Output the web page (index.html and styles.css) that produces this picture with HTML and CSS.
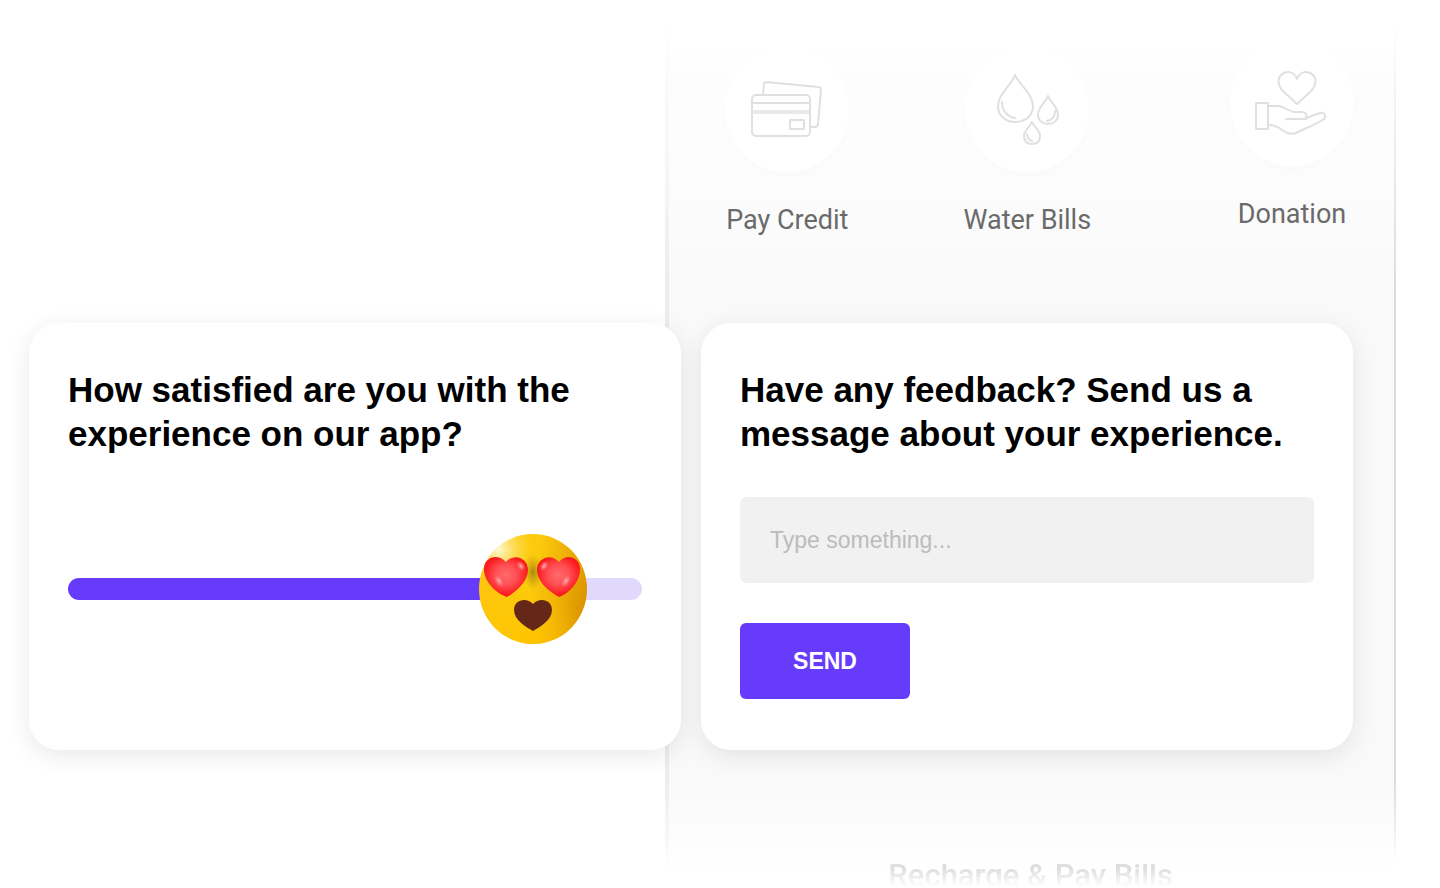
FILE: index.html
```html
<!DOCTYPE html>
<html lang="en">
<head>
    <meta charset="utf-8">
    <title>App feedback</title>
    <meta name="viewport" content="width=device-width, initial-scale=1.0">
    <link rel="stylesheet" href="styles.css">
</head>
<body>
    <main class="stage">
        <section class="phone">
            <div class="services">
                <div class="service">
                    <svg class="icon" viewBox="0 0 124 124">
                        <path d="M38 46 L39 36 Q39 34 41 34 L93 39 Q96 39 96 42 L93 76 Q93 79 90 79 L86 79"/>
                        <rect x="27" y="47" width="58" height="41" rx="4"/>
                        <path d="M27 55 H85"/>
                        <path d="M28 64 H84" stroke-width="4" stroke="#e9e9e9" stroke-linecap="butt"/>
                        <rect x="65" y="72" width="14" height="9"/>
                    </svg>
                    <span>Pay Credit</span>
                </div>
                <div class="service">
                    <svg class="icon" viewBox="0 0 124 124">
                        <path d="M50 27 C46 38 33 46 33 58 C33 68 41 74 50 74 C60 74 68 68 68 58 C68 46 55 38 50 27 Z"/>
                        <path d="M37 54 C37 63 43 69 50 70"/>
                        <path d="M83 48 C80 55 73 59 73 67 C73 72 77 76 83 76 C89 76 93 72 93 67 C93 59 86 55 83 48 Z"/>
                        <path d="M90 63 C90 69 87 72 82 73"/>
                        <path d="M67 74 C65 79 59 82 59 88 C59 93 62 96 67 96 C72 96 75 93 75 88 C75 82 69 79 67 74 Z"/>
                        <path d="M62 86 C62 90 64 92 67 93"/>
                    </svg>
                    <span>Water Bills</span>
                </div>
                <div class="service service-last">
                    <svg class="icon" viewBox="0 0 124 124">
                        <path d="M67 62 L53 49 C48 44 47 37 51 33 C56 28 64 29 67 37 C70 29 78 28 83 33 C87 37 86 44 81 49 Z"/>
                        <rect x="26" y="61" width="12" height="26"/>
                        <path d="M38 64 H49 C55 65 58 69 64 70 H72 C76 70 77 73 76 77 H56"/>
                        <path d="M76 76 L90 71 C94 70 97 74 94 77 C84 84 75 86 66 91 C60 93 56 91 52 88 C47 84 43 83 38 83"/>
                    </svg>
                    <span>Donation</span>
                </div>
            </div>
            <h3 class="phone-title">Recharge &amp; Pay Bills</h3>
        </section>

        <div class="cards">
            <section class="card">
                <h2><label for="rating">How satisfied are you with the experience on our app?</label></h2>
                <div class="slider" id="slider">
                    <input type="range" id="rating" min="0" max="100" value="81">
                    <svg class="emoji" viewBox="0 0 110 112">
                        <defs>
                            <linearGradient id="face" x1="0" y1="0.3" x2="1" y2="0.5">
                                <stop offset="0" stop-color="#ffc50b"/>
                                <stop offset="0.5" stop-color="#fccb0d"/>
                                <stop offset="1" stop-color="#dd9500"/>
                            </linearGradient>
                            <radialGradient id="shine" cx="0.18" cy="0.14" r="0.32">
                                <stop offset="0" stop-color="#fff8d8"/>
                                <stop offset="1" stop-color="#ffe04a" stop-opacity="0"/>
                            </radialGradient>
                            <radialGradient id="glow" cx="0.45" cy="1" r="0.55">
                                <stop offset="0" stop-color="#ffc400"/>
                                <stop offset="1" stop-color="#ffc400" stop-opacity="0"/>
                            </radialGradient>
                            <radialGradient id="shade">
                                <stop offset="0" stop-color="#a88a10"/>
                                <stop offset="1" stop-color="#c89a08" stop-opacity="0"/>
                            </radialGradient>
                            <radialGradient id="eye" cx="0.5" cy="0.45" r="0.5">
                                <stop offset="0" stop-color="#ff6a6e"/>
                                <stop offset="0.5" stop-color="#ff4f54"/>
                                <stop offset="1" stop-color="#fb1a1d"/>
                            </radialGradient>
                            <radialGradient id="spark">
                                <stop offset="0" stop-color="#ffb5ba"/>
                                <stop offset="1" stop-color="#ff7a80" stop-opacity="0"/>
                            </radialGradient>
                        </defs>
                        <ellipse cx="55" cy="56" rx="54" ry="55" fill="url(#face)"/>
                        <ellipse cx="55" cy="56" rx="54" ry="55" fill="url(#shine)"/>
                        <ellipse cx="55" cy="56" rx="54" ry="55" fill="url(#glow)"/>
                        <ellipse cx="55" cy="39" rx="10" ry="18" fill="url(#shade)"/>
                        <path d="M29 64 C22 62 6 51 6 36 C6 24 20 20 28 29 C35 20 50 24 50 37 C50 48 39 58 29 64 Z" fill="url(#eye)"/>
                        <path d="M81 64 C88 62 102 51 102 36 C102 24 88 20 81 29 C74 20 59 24 59 37 C59 48 70 58 81 64 Z" fill="url(#eye)"/>
                        <ellipse cx="43" cy="33" rx="4" ry="6" fill="url(#spark)" transform="rotate(-35 43 33)"/>
                        <ellipse cx="21" cy="48" rx="4" ry="7" fill="url(#spark)" transform="rotate(-30 21 48)"/>
                        <ellipse cx="66" cy="33" rx="4" ry="6" fill="url(#spark)" transform="rotate(35 66 33)"/>
                        <ellipse cx="88" cy="48" rx="4" ry="7" fill="url(#spark)" transform="rotate(30 88 48)"/>
                        <path d="M55 98 C48 94 36 87 36 77 C36 66 49 64 55 71 C61 64 74 66 74 77 C74 87 62 94 55 98 Z" fill="#642718"/>
                    </svg>
                </div>
            </section>

            <form class="card">
                <h2><label for="message">Have any feedback? Send us a message about your experience.</label></h2>
                <input type="text" class="message" id="message" placeholder="Type something...">
                <button type="button" class="send">SEND</button>
            </form>
        </div>
    </main>

    <script src="script.js"></script>
</body>
</html>
```
FILE: styles.css
```css
* {
    box-sizing: border-box;
}

body {
    margin: 0;
    background-color: white;
    font-family: "Liberation Sans", Arial, sans-serif;
}

h2, h3 {
    margin: 0;
}

/* the phone and the cards share one grid cell, cards on top */
.stage {
    display: grid;
    height: 100vh;
    min-height: 800px;
    overflow: hidden;
}

.phone, .cards {
    grid-area: 1 / 1;
}

.phone {
    display: flex;
    flex-direction: column;
    justify-content: space-between;
    margin: 0 44px 0 46.2%;
    padding-top: 42px;
    font-family: Roboto, sans-serif;
    background:
        linear-gradient(transparent 2%, #f7f7f7 18%, #ececec 33%, #ececec 86%, transparent 98%) left / 4px 100% no-repeat,
        linear-gradient(transparent 2%, #dcdcdc 33%, #dcdcdc 88%, transparent 97%) right / 2px 100% no-repeat,
        linear-gradient(white 5%, #fdfdfd 9%, #fdfdfd 18%, #f9f9f9 33%, #f9f9f9 88%, white 98%);
}

.services {
    display: flex;
    align-items: flex-end;
    gap: 116px;
    padding: 0 42px 0 60px;
}

.service {
    display: flex;
    flex-direction: column;
    align-items: center;
    gap: 32px;
    width: 124px;
    color: #6a6a6a;
    font-size: 27px;
    line-height: 32px;
    white-space: nowrap;
}

.service-last {
    margin-left: auto;
    padding-bottom: 6px;
}

.icon {
    width: 124px;
    height: 124px;
    border-radius: 50%;
    background-color: white;
    box-shadow: 0 6px 10px rgba(0, 0, 0, 0.01);
    fill: none;
    stroke: #e0e0e0;
    stroke-width: 2;
    stroke-linejoin: round;
    stroke-linecap: round;
}

.phone-title {
    color: #dedede;
    font-size: 31px;
    font-weight: 500;
    line-height: 24px;
    text-align: center;
    -webkit-mask-image: linear-gradient(black 20%, transparent 95%);
    mask-image: linear-gradient(black 20%, transparent 95%);
}

.cards {
    display: flex;
    align-items: flex-start;
    gap: 20px;
    padding: 323px 87px 0 29px;
}

.card {
    flex: 1;
    min-height: 427px;
    padding: 45px 39px;
    border-radius: 30px;
    background-color: white;
    box-shadow: 0 6px 24px rgba(0, 0, 0, 0.09);
}

.card h2 {
    font-size: 35px;
    line-height: 44px;
}

.slider {
    --value: 81%;
    position: relative;
    display: flex;
    align-items: center;
    height: 112px;
    margin-top: 77px;
}

.slider input {
    appearance: none;
    -webkit-appearance: none;
    width: 100%;
    height: 22px;
    margin: 0;
    border-radius: 11px;
    background: linear-gradient(to right, #673bfb var(--value), #e1d9fd var(--value));
}

.slider input::-webkit-slider-thumb {
    -webkit-appearance: none;
    width: 22px;
    height: 22px;
    opacity: 0;
}

.emoji {
    position: absolute;
    left: var(--value);
    width: 110px;
    height: 112px;
    transform: translateX(-50%);
    pointer-events: none;
}

.message {
    display: block;
    width: 100%;
    height: 86px;
    margin: 41px 0 40px;
    padding: 0 30px;
    border: none;
    border-radius: 6px;
    background-color: #f1f1f1;
    font-family: inherit;
    font-size: 23px;
}

.message::placeholder {
    color: #bcbcbc;
}

.send {
    width: 170px;
    height: 76px;
    border: none;
    border-radius: 6px;
    background-color: #673bfb;
    color: white;
    font-family: inherit;
    font-size: 23px;
    font-weight: bold;
}
```
FILE: script.js
```js
const slider = document.getElementById('slider');

document.getElementById('rating').addEventListener('input', (e) => {
    slider.style.setProperty('--value', `${e.target.value}%`);
});
```
